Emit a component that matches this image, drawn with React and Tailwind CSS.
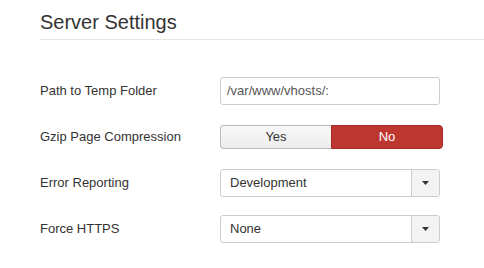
export default function App() {
  const rows = [
    { label: 'Path to Temp Folder', kind: 'input', value: '/var/www/vhosts/:' },
    { label: 'Gzip Page Compression', kind: 'toggle' },
    { label: 'Error Reporting', kind: 'select', value: 'Development' },
    { label: 'Force HTTPS', kind: 'select', value: 'None' },
  ]

  return (
    <div className="w-[484px] h-[268px] bg-white pt-[10px] pl-[40px] font-['Liberation_Sans',Arial,sans-serif] text-[#333]">
      <h2 className="text-[20px] leading-[24px] pb-[5px] border-b border-[#e5e5e5]">Server Settings</h2>
      <div className="mt-[37px] grid grid-cols-[180px_1fr] auto-rows-[28px] gap-y-[18px] text-[13px]">
        {rows.map((r) => (
          <Row key={r.label} {...r} />
        ))}
      </div>
    </div>
  )
}

function Row({ label, kind, value }) {
  return (
    <>
      <div className="flex items-center">{label}</div>
      <div className="flex items-center">
        {kind === 'input' && (
          <div className="w-[220px] h-[28px] border border-[#ccc] rounded-[3px] flex items-center pl-[6px] text-[#555] bg-white overflow-hidden whitespace-nowrap">
            {value}
          </div>
        )}
        {kind === 'toggle' && (
          <div className="w-[223px] h-[24px] flex">
            <div className="w-[111px] flex items-center justify-center border border-[#bbb] border-r-0 rounded-l-[4px] bg-gradient-to-b from-[#f8f8f8] to-[#ececec]">
              Yes
            </div>
            <div className="flex-1 flex items-center justify-center border border-[#a52a24] rounded-r-[4px] bg-[#bd362f] text-white">
              No
            </div>
          </div>
        )}
        {kind === 'select' && (
          <div className="w-[220px] h-[28px] border border-[#ccc] rounded-[3px] flex bg-white overflow-hidden">
            <div className="flex-1 flex items-center pl-[9px]">{value}</div>
            <div className="w-[28px] border-l border-[#ccc] bg-[#f3f3f3] flex items-center justify-center">
              <svg width="7" height="4" viewBox="0 0 7 4">
                <path d="M0 0h7L3.5 4z" fill="#333" />
              </svg>
            </div>
          </div>
        )}
      </div>
    </>
  )
}
